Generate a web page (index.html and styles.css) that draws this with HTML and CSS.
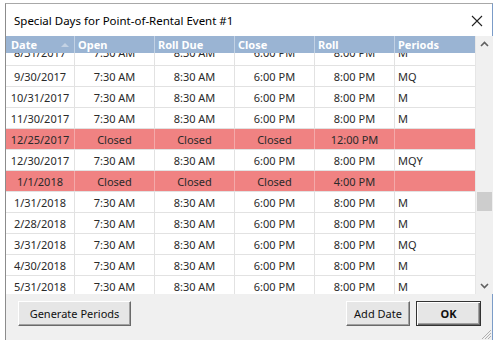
FILE: index.html
```html
<!DOCTYPE html>
<html>
<head>
<meta charset="utf-8">
<link rel="stylesheet" href="styles.css">
</head>
<body>
<div class="window">
  <div class="titlebar">
    <span class="title">Special Days for Point-of-Rental Event #1</span>
    <svg class="close" width="12" height="12" viewBox="0 0 12 12"><path d="M1 1 L11 11 M11 1 L1 11" stroke="#222" stroke-width="1.1" fill="none"/></svg>
  </div>
  <div class="gridwrap">
    <div class="grid">
      <div class="hdr">
        <div class="c c1 h">Date<span class="sort"></span></div>
        <div class="c c2 h">Open</div>
        <div class="c c3 h">Roll Due</div>
        <div class="c c4 h">Close</div>
        <div class="c c5 h">Roll</div>
        <div class="c c6 h">Periods</div>
      </div>
      <div class="body">
        <div class="rows">
          <div class="row"><div class="c c1">8/31/2017</div><div class="c c2">7:30 AM</div><div class="c c3">8:30 AM</div><div class="c c4">6:00 PM</div><div class="c c5">8:00 PM</div><div class="c c6">M</div></div>
          <div class="row"><div class="c c1">9/30/2017</div><div class="c c2">7:30 AM</div><div class="c c3">8:30 AM</div><div class="c c4">6:00 PM</div><div class="c c5">8:00 PM</div><div class="c c6">MQ</div></div>
          <div class="row"><div class="c c1">10/31/2017</div><div class="c c2">7:30 AM</div><div class="c c3">8:30 AM</div><div class="c c4">6:00 PM</div><div class="c c5">8:00 PM</div><div class="c c6">M</div></div>
          <div class="row"><div class="c c1">11/30/2017</div><div class="c c2">7:30 AM</div><div class="c c3">8:30 AM</div><div class="c c4">6:00 PM</div><div class="c c5">8:00 PM</div><div class="c c6">M</div></div>
          <div class="row closed"><div class="c c1">12/25/2017</div><div class="c c2">Closed</div><div class="c c3">Closed</div><div class="c c4">Closed</div><div class="c c5">12:00 PM</div><div class="c c6"></div></div>
          <div class="row"><div class="c c1">12/30/2017</div><div class="c c2">7:30 AM</div><div class="c c3">8:30 AM</div><div class="c c4">6:00 PM</div><div class="c c5">8:00 PM</div><div class="c c6">MQY</div></div>
          <div class="row closed"><div class="c c1">1/1/2018</div><div class="c c2">Closed</div><div class="c c3">Closed</div><div class="c c4">Closed</div><div class="c c5">4:00 PM</div><div class="c c6"></div></div>
          <div class="row"><div class="c c1">1/31/2018</div><div class="c c2">7:30 AM</div><div class="c c3">8:30 AM</div><div class="c c4">6:00 PM</div><div class="c c5">8:00 PM</div><div class="c c6">M</div></div>
          <div class="row"><div class="c c1">2/28/2018</div><div class="c c2">7:30 AM</div><div class="c c3">8:30 AM</div><div class="c c4">6:00 PM</div><div class="c c5">8:00 PM</div><div class="c c6">M</div></div>
          <div class="row"><div class="c c1">3/31/2018</div><div class="c c2">7:30 AM</div><div class="c c3">8:30 AM</div><div class="c c4">6:00 PM</div><div class="c c5">8:00 PM</div><div class="c c6">MQ</div></div>
          <div class="row"><div class="c c1">4/30/2018</div><div class="c c2">7:30 AM</div><div class="c c3">8:30 AM</div><div class="c c4">6:00 PM</div><div class="c c5">8:00 PM</div><div class="c c6">M</div></div>
          <div class="row"><div class="c c1">5/31/2018</div><div class="c c2">7:30 AM</div><div class="c c3">8:30 AM</div><div class="c c4">6:00 PM</div><div class="c c5">8:00 PM</div><div class="c c6">M</div></div>
        </div>
      </div>
    </div>
    <div class="scrollbar">
      <svg class="arrow" width="17" height="17" viewBox="0 0 17 17"><path d="M5 10 L8.5 6.5 L12 10" stroke="#606060" stroke-width="1.6" fill="none"/></svg>
      <div class="track"><div class="thumb"></div></div>
      <svg class="arrow" width="17" height="17" viewBox="0 0 17 17"><path d="M5 7 L8.5 10.5 L12 7" stroke="#606060" stroke-width="1.6" fill="none"/></svg>
    </div>
  </div>
  <div class="footer">
    <button class="btn gen">Generate Periods</button>
    <div class="spacer"></div>
    <button class="btn add">Add Date</button>
    <button class="btn ok">OK</button>
  </div>
  <svg class="grip" width="12" height="12" viewBox="0 0 12 12"><path d="M11 2 L2 11 M11 5 L5 11 M11 8 L8 11" stroke="#b0b0b0" stroke-width="1" fill="none"/></svg>
</div>
</body>
</html>
```
FILE: styles.css
```css
html, body {
  margin: 0;
  padding: 0;
}
body {
  width: 499px;
  height: 340px;
  overflow: hidden;
  background: #ffffff;
  font-family: "Noto Sans", "Open Sans", sans-serif;
  color: #222;
}
.window {
  position: relative;
  margin: 3px 0 0 5px;
  width: 486px;
  height: 336px;
  border-left: 1px solid #8c8c8c;
  border-top: 1px solid #a8a8a8;
  border-right: 1px solid #7b9cc8;
  background: #f0f0f0;
  display: flex;
  flex-direction: column;
}
.titlebar {
  height: 32px;
  background: #fff;
  display: flex;
  align-items: center;
  padding: 0 5px 0 8px;
  flex: none;
}
.title {
  font-size: 11.5px;
  color: #000;
  flex: 1;
  padding-top: 1px;
}
.close {
  margin-right: 4px;
  margin-top: 1px;
}
.gridwrap {
  display: flex;
  height: 258px;
  flex: none;
  background: #fff;
}
.grid {
  width: 469px;
  display: flex;
  flex-direction: column;
}
.hdr {
  display: flex;
  height: 17px;
  background: #9ab4d3;
  flex: none;
  position: relative;
  z-index: 1;
}
.c {
  box-sizing: border-box;
  height: 100%;
  font-size: 11px;
  display: flex;
  align-items: center;
  justify-content: center;
  border-right: 1px solid #e2e2e2;
  white-space: nowrap;
  position: relative;
}
.c1 { width: 69px; }
.c2, .c3, .c4, .c5, .c6 { width: 80px; }
.c6 { justify-content: flex-start; padding-left: 3px; border-right: none; }
.h {
  color: #fff;
  font-weight: bold;
  justify-content: flex-start;
  padding-left: 3px;
  border-right: 1px solid #c2d2e5;
}
.hdr .c1 { padding-left: 5px; }
.hdr .c6 { border-right: none; }
.sort {
  position: absolute;
  right: 5px;
  top: 7px;
  width: 0;
  height: 0;
  border-left: 4px solid transparent;
  border-right: 4px solid transparent;
  border-bottom: 4px solid #c3d2e4;
}
.body {
  flex: 1;
  overflow: hidden;
}
.rows {
  margin-top: -9px;
}
.row {
  display: flex;
  height: 21px;
  box-sizing: border-box;
  border-bottom: 1px solid #e2e2e2;
  color: #2a2a2a;
}
.row:first-child { height: 22px; }
.row:first-child .c { padding-bottom: 5px; }
.row .c6 { padding-left: 3px; }
.closed {
  background: #f08282;
}
.closed .c { border-right-color: #f4a9a9; }
.closed .c6 { border-right: none; }
.scrollbar {
  width: 17px;
  background: #f0f0f0;
  display: flex;
  flex-direction: column;
  border-left: 1px solid #e6e6e6;
}
.arrow { flex: none; display: block; }
.track {
  flex: 1;
  position: relative;
}
.thumb {
  position: absolute;
  left: 1px;
  right: 1px;
  top: 139px;
  height: 19px;
  background: #cdcdcd;
}
.footer {
  flex: 1;
  display: flex;
  align-items: flex-start;
  padding: 7px 11px 0 12px;
  gap: 6px;
}
.spacer { flex: 1; }
.btn {
  font-family: "Noto Sans", "Open Sans", sans-serif;
  font-size: 11px;
  color: #111;
  height: 25px;
  background: #e6e6e6;
  border: 1px solid;
  border-color: #fff #6a6a6a #6a6a6a #fff;
  box-shadow: inset -1px -1px 0 #a0a0a0;
  padding: 0;
  margin: 0;
}
.gen { width: 113px; }
.add { width: 64px; }
.ok {
  width: 65px;
  font-weight: bold;
  border: 1px solid #333;
  box-shadow: inset 1px 1px 0 #fff, inset -1px -1px 0 #6a6a6a, inset -2px -2px 0 #a0a0a0;
}
.grip {
  position: absolute;
  right: 0;
  bottom: 0;
}
```
